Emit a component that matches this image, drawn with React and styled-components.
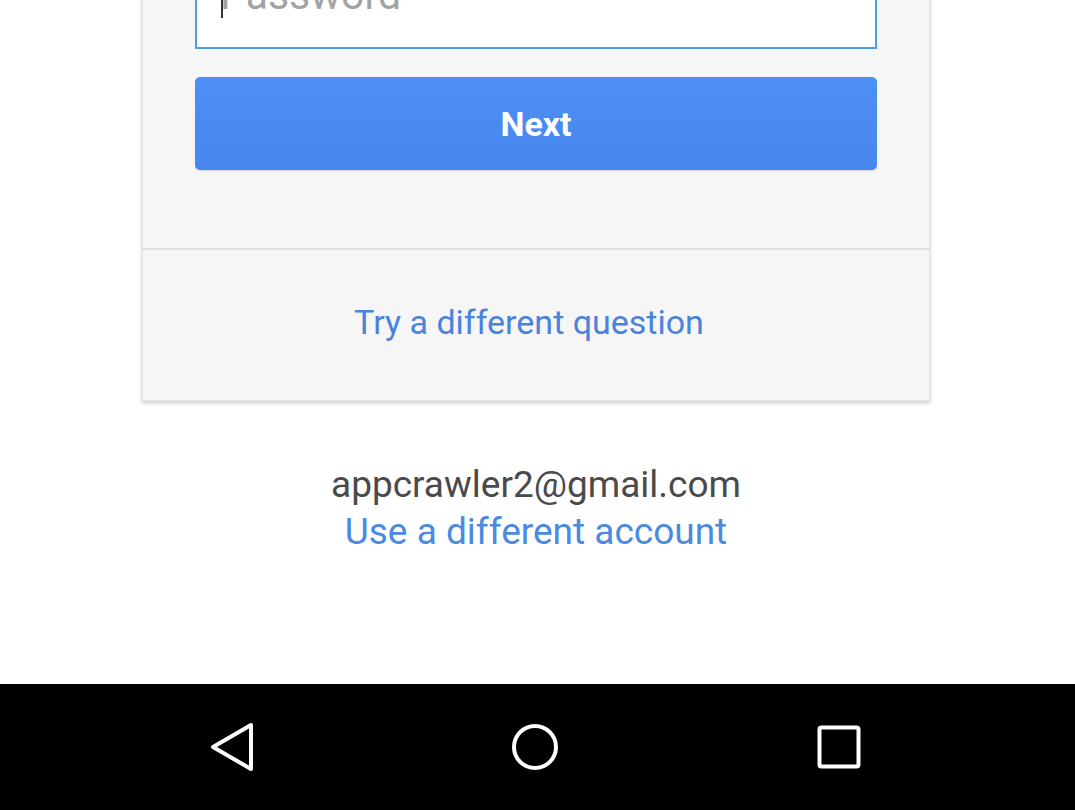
import React from 'react';
import styled, { createGlobalStyle } from 'styled-components';

const GlobalStyle = createGlobalStyle`
  html, body {
    margin: 0;
    padding: 0;
    background: #fff;
    font-family: Roboto, "Liberation Sans", Arial, sans-serif;
  }
`;

const Screen = styled.div`
  display: flex;
  flex-direction: column;
  width: 1075px;
  height: 810px;
  overflow: hidden;
  background: #fff;
`;

const Main = styled.div`
  flex: 1;
  display: flex;
  flex-direction: column;
  align-items: center;
  padding-right: 3px;
`;

const Card = styled.div`
  width: 786px;
  margin-top: -51px;
  background: #f6f6f6;
  border: 1px solid #e4e4e4;
  border-top: none;
  box-shadow: 0 2px 4px rgba(0, 0, 0, 0.22);
`;

const Form = styled.div`
  display: flex;
  flex-direction: column;
  gap: 28px;
  padding: 0 52px 78px;
`;

const PasswordField = styled.div`
  position: relative;
  height: 100px;
  box-sizing: border-box;
  display: flex;
  align-items: flex-end;
  padding: 0 0 32px 23px;
  background: #fff;
  border: 2px solid #4f9be6;
`;

const Placeholder = styled.span`
  font-size: 41px;
  line-height: 40px;
  color: #a3a3a3;
`;

const Caret = styled.span`
  position: absolute;
  left: 24px;
  bottom: 29px;
  width: 2px;
  height: 40px;
  background: #333;
`;

const NextButton = styled.button`
  height: 93px;
  border: none;
  border-radius: 5px;
  background: linear-gradient(#4d8ff4, #4787ee);
  box-shadow: 0 1px 1px rgba(0, 0, 0, 0.15);
  color: #fff;
  font-family: Roboto, "Liberation Sans", Arial, sans-serif;
  font-size: 34px;
  font-weight: 700;
  cursor: pointer;
`;

const CardFooter = styled.div`
  height: 152px;
  box-sizing: border-box;
  display: flex;
  align-items: center;
  justify-content: center;
  padding: 0 14px 6px 0;
  border-top: 2px solid #e0e0e0;
`;

const Link = styled.a`
  color: ${(p) => p.color || '#4a82dc'};
  font-size: ${(p) => p.size || 34}px;
  text-decoration: none;
`;

const Account = styled.div`
  margin-top: 60px;
  display: flex;
  flex-direction: column;
  align-items: center;
  line-height: 47px;
`;

const Email = styled.div`
  font-size: 37px;
  color: #4a4a4a;
`;

const NavBar = styled.div`
  height: 126px;
  background: #000;
  display: grid;
  grid-template-columns: repeat(3, 1fr);
  align-items: center;
  justify-items: center;
  padding: 0 84px 0 80px;
`;

const NavIcon = styled.svg`
  width: 50px;
  height: 50px;
  stroke: #fff;
  stroke-width: 4;
  fill: none;
  stroke-linejoin: round;
  stroke-linecap: round;
`;

export default function App() {
  return (
    <Screen>
      <GlobalStyle />
      <Main>
        <Card>
          <Form>
            <PasswordField>
              <Caret />
              <Placeholder>Password</Placeholder>
            </PasswordField>
            <NextButton>Next</NextButton>
          </Form>
          <CardFooter>
            <Link href="#">Try a different question</Link>
          </CardFooter>
        </Card>
        <Account>
          <Email>appcrawler2@gmail.com</Email>
          <Link href="#" size={37} color="#4a8ae2">Use a different account</Link>
        </Account>
      </Main>
      <NavBar>
        <NavIcon viewBox="0 0 50 50">
          <path d="M6 25 L44 3 L44 47 Z" />
        </NavIcon>
        <NavIcon viewBox="0 0 50 50">
          <circle cx="25" cy="25" r="21" />
        </NavIcon>
        <NavIcon viewBox="0 0 50 50">
          <rect x="5.5" y="5.5" width="39" height="39" rx="2" />
        </NavIcon>
      </NavBar>
    </Screen>
  );
}
